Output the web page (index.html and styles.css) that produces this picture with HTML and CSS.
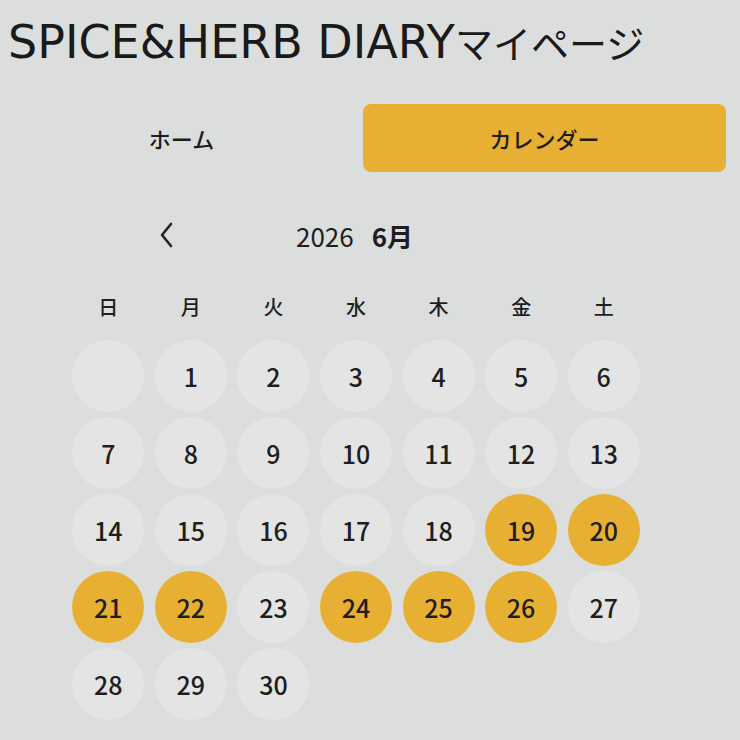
FILE: index.html
```html
<!DOCTYPE html>
<html lang="ja">
<head>
<meta charset="utf-8">
<link rel="stylesheet" href="styles.css">
</head>
<body>
<div class="page">
  <h1 class="title">SPICE&amp;HERB DIARY<span class="jp">マイページ</span></h1>
  <div class="tabs">
    <div class="tab">ホーム</div>
    <div class="tab active">カレンダー</div>
  </div>
  <div class="calendar">
    <div class="nav">
      <span class="prev">
        <svg width="18" height="28" viewBox="0 0 18 28"><path d="M14 3 L5 14 L14 25" fill="none" stroke="#222" stroke-width="2.6" stroke-linecap="round" stroke-linejoin="round"/></svg>
      </span>
      <span class="year">2026</span>
      <span class="month">6月</span>
    </div>
    <div class="grid">
      <div class="wd">日</div><div class="wd">月</div><div class="wd">火</div><div class="wd">水</div><div class="wd">木</div><div class="wd">金</div><div class="wd">土</div>
      <div class="day empty"></div>
      <div class="day"><span>1</span></div>
      <div class="day"><span>2</span></div>
      <div class="day"><span>3</span></div>
      <div class="day"><span>4</span></div>
      <div class="day"><span>5</span></div>
      <div class="day"><span>6</span></div>
      <div class="day"><span>7</span></div>
      <div class="day"><span>8</span></div>
      <div class="day"><span>9</span></div>
      <div class="day"><span>10</span></div>
      <div class="day"><span>11</span></div>
      <div class="day"><span>12</span></div>
      <div class="day"><span>13</span></div>
      <div class="day"><span>14</span></div>
      <div class="day"><span>15</span></div>
      <div class="day"><span>16</span></div>
      <div class="day"><span>17</span></div>
      <div class="day"><span>18</span></div>
      <div class="day on"><span>19</span></div>
      <div class="day on"><span>20</span></div>
      <div class="day on"><span>21</span></div>
      <div class="day on"><span>22</span></div>
      <div class="day"><span>23</span></div>
      <div class="day on"><span>24</span></div>
      <div class="day on"><span>25</span></div>
      <div class="day on"><span>26</span></div>
      <div class="day"><span>27</span></div>
      <div class="day"><span>28</span></div>
      <div class="day"><span>29</span></div>
      <div class="day"><span>30</span></div>
    </div>
  </div>
</div>
</body>
</html>
```
FILE: styles.css
```css
html, body {
  margin: 0;
  padding: 0;
  background: #dcdedd;
}
body {
  font-family: "Noto Sans CJK JP", "Noto Sans", sans-serif;
  color: #1e1e1e;
  width: 740px;
  height: 740px;
  overflow: hidden;
}
.page {
  padding: 14px 14px 0 8px;
}
.title {
  margin: 0;
  font-family: "DejaVu Sans", "Noto Sans CJK JP", sans-serif;
  font-size: 46px;
  font-weight: 400;
  line-height: 56px;
  letter-spacing: 0;
  color: #1a1a1a;
  white-space: nowrap;
}
.title .jp {
  font-family: "Noto Sans CJK JP", sans-serif;
  font-size: 38px;
}
.tabs {
  display: grid;
  grid-template-columns: 1fr 1fr;
  margin: 34px 0 0 -8px;
  width: 726px;
}
.tab {
  height: 68px;
  display: flex;
  align-items: center;
  justify-content: center;
  font-size: 22px;
  font-weight: 500;
  border-radius: 8px;
}
.tab.active {
  background: #e8b032;
}
.calendar {
  margin: 38px 0 0 59px;
  width: 578px;
}
.nav {
  display: flex;
  align-items: center;
  height: 50px;
}
.prev {
  display: flex;
  margin-left: 90px;
  width: 139px;
}
.year {
  font-size: 26px;
  font-weight: 400;
}
.month {
  font-size: 26px;
  font-weight: 700;
  margin-left: 18px;
}
.grid {
  display: grid;
  grid-template-columns: repeat(7, 1fr);
  grid-template-rows: 45px;
  grid-auto-rows: 77px;
  margin-top: 32px;
}
.grid .wd {
  font-size: 20px;
  font-weight: 500;
  text-align: center;
  align-self: start;
}
.day {
  display: flex;
  align-items: center;
  justify-content: center;
}
.day span, .day.empty::before {
  width: 72px;
  height: 72px;
  border-radius: 50%;
  background: #e3e4e3;
  display: flex;
  align-items: center;
  justify-content: center;
  font-size: 25px;
  font-weight: 500;
}
.day.empty::before {
  content: "";
}
.day.on span {
  background: #e8b032;
}
```
